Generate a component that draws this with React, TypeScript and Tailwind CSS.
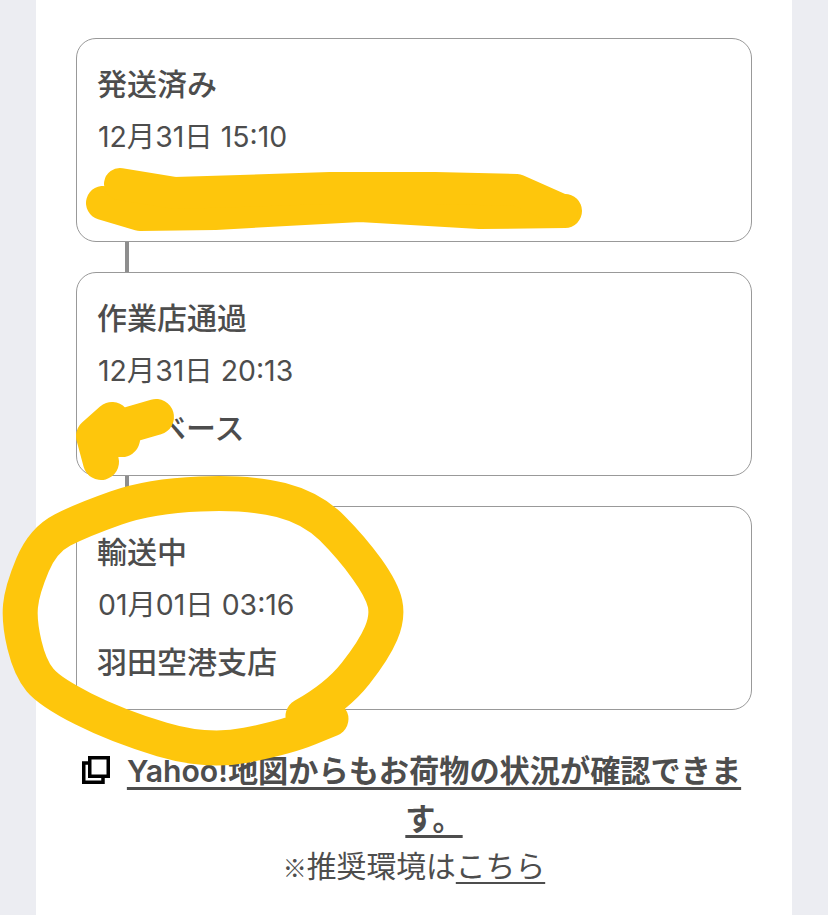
const events = [
  { title: "発送済み", date: "12月31日 15:10", place: "\u00a0", indent: "" },
  { title: "作業店通過", date: "12月31日 20:13", place: "ベース", indent: "pl-[59px]" },
  { title: "輸送中", date: "01月01日 03:16", place: "羽田空港支店", indent: "" },
];

const ring: [number, number][] = [
  [303, 716], [337, 697], [374, 650], [388, 617], [382, 590], [352, 548], [312, 508],
  [250, 492], [150, 496], [82, 520], [43, 540], [22, 590], [19, 622], [30, 668],
  [50, 692], [117, 726], [207, 753], [287, 737], [331, 719],
];

// smooth line through the midpoints of the hand-drawn stroke
function smooth(points: [number, number][]) {
  let d = `M${points[0][0]} ${points[0][1]}`;
  for (let i = 1; i < points.length - 1; i++) {
    const mx = (points[i][0] + points[i + 1][0]) / 2;
    const my = (points[i][1] + points[i + 1][1]) / 2;
    d += ` Q${points[i][0]} ${points[i][1]} ${mx} ${my}`;
  }
  const last = points[points.length - 1];
  return d + ` L${last[0]} ${last[1]}`;
}

function Card({ title, date, place, indent }: { title: string; date: string; place: string; indent: string }) {
  return (
    <div className="h-[204px] rounded-[20px] border border-[#999999] bg-white px-[20px] pt-[23px]">
      <p className="text-[30px] leading-[44px] font-medium">{title}</p>
      <p className="mt-[9px] pl-px text-[28.4px] leading-[44px]">{date}</p>
      <p className={`mt-[13px] text-[30px] leading-[44px] font-medium ${indent}`}>{place}</p>
    </div>
  );
}

export default function App() {
  return (
    <div className="relative h-[915px] overflow-hidden bg-[#ecedf2] px-[36px] font-['Inter','Noto_Sans_CJK_JP',sans-serif] text-[#4d4d4d]">
      <div className="h-full bg-white px-[40px] pt-[38px]">
        {events.map((event, index) => (
          <div key={index}>
            {index > 0 && <div className="ml-[49px] h-[30px] w-[4px] bg-[#8e8e8e]" />}
            <Card {...event} />
          </div>
        ))}

        {/* Yahoo!地図リンク */}
        <div className="mt-[37px] flex items-start pl-[6px]">
          <svg width="28" height="28" viewBox="0 0 28 28" className="mt-[9px] shrink-0" fill="none" stroke="#000000" strokeWidth="3.5">
            <rect x="7.75" y="1.75" width="18.5" height="18.5" />
            <path d="M7 7H1.75V26.25H21V21" />
          </svg>
          <a className="ml-[15px] w-[618px] text-center text-[30.2px] leading-[48px] font-semibold underline underline-offset-[5px]">
            Yahoo!地図からもお荷物の状況が確認できま す。
          </a>
        </div>
        <p className="mt-[-1px] text-center text-[29.8px] leading-[48px]">
          <span className="font-['Noto_Sans_CJK_JP',sans-serif] text-[24px] font-medium">※</span>推奨環境は
          <a className="underline underline-offset-[5px]">こちら</a>
        </p>
      </div>

      {/* 黄色の手書きマーカー */}
      <svg width="828" height="915" viewBox="0 0 828 915" className="absolute top-0 left-0" fill="none" stroke="#fec60c" strokeLinecap="round" strokeLinejoin="round">
        <path strokeWidth="34" d="M103 203L140 214L215 213L360 205L480 212L565 211" />
        <path strokeWidth="32" d="M120 184L175 193L330 188L435 188L517 190L562 210" />
        <path strokeWidth="36" d="M156 417L125 426L122 439L94 436L101 462M112 420L94 436" />
        <path strokeWidth="35" d={smooth(ring)} />
      </svg>
    </div>
  );
}
